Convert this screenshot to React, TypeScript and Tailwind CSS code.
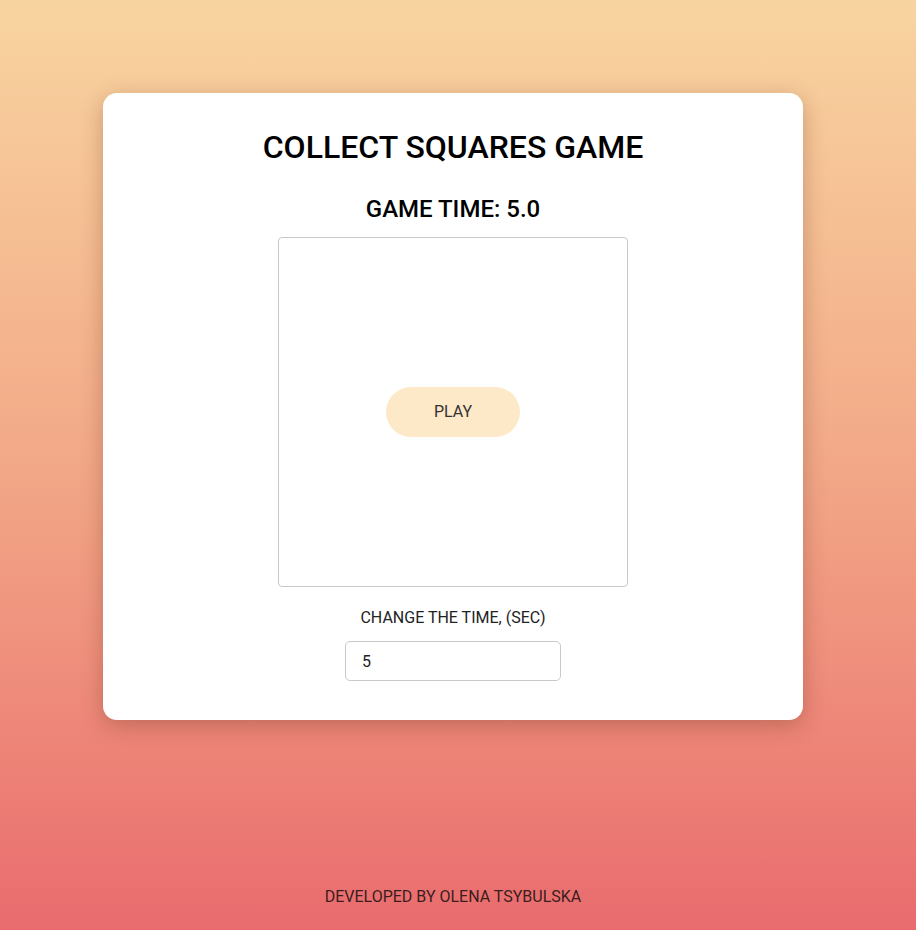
export default function App() {
    return (
        <div
            className="flex min-h-screen flex-col items-center bg-gradient-to-b from-[#f8d4a0] via-[#f2a887] to-[#e96b6e] pr-[10px] text-[#222]"
            style={{ fontFamily: 'Roboto, "Liberation Sans", sans-serif' }}
        >
            <main className="flex w-full flex-1 justify-center pt-[93px]">
                <div className="flex h-[627px] w-[700px] flex-col items-center rounded-[14px] bg-white pt-[38px] shadow-[0_6px_22px_rgba(90,40,20,0.3)]">
                    <h1 className="text-[32px] font-medium leading-[32px] text-black">COLLECT SQUARES GAME</h1>
                    <h2 className="mt-[34px] text-[24px] font-medium leading-[24px] text-black">GAME TIME: 5.0</h2>
                    <div className="mt-[16px] flex h-[350px] w-[350px] items-center justify-center rounded-[4px] border border-[#c9c9c9]">
                        <button className="h-[50px] w-[134px] rounded-full bg-[#fde8c8] text-[16px] text-[#333]">PLAY</button>
                    </div>
                    <label className="mt-[23px] text-[16px] leading-[16px] text-[#222]">CHANGE THE TIME, (SEC)</label>
                    <input
                        type="number"
                        defaultValue={5}
                        className="mt-[15px] h-[40px] w-[216px] rounded-[5px] border border-[#c9c9c9] px-4 text-[16px] text-[#222] outline-none"
                    />
                </div>
            </main>
            <footer className="pb-[21px] text-[16px] leading-[24px] text-[#3a1d1d]">DEVELOPED BY OLENA TSYBULSKA</footer>
        </div>
    );
}
